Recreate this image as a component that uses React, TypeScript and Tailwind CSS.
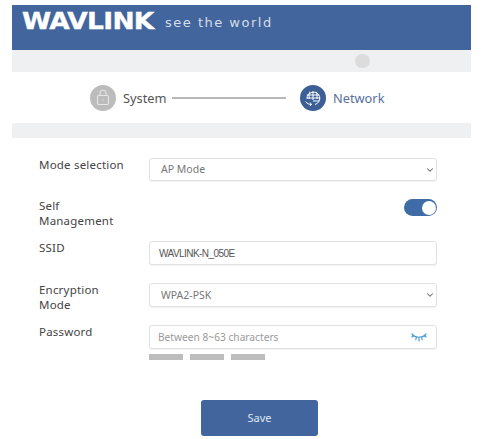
import React from "react";
import { ChevronDown } from "lucide-react";

const labelClass = "w-[110px] shrink-0 -mt-[1px] text-[11.5px] leading-[15px] tracking-[0.2px] text-[#444] font-['Noto_Sans',sans-serif]";
const fieldClass = "w-[288px] rounded-[3px] border border-[#e2e2e2] bg-white shadow-[0_1px_1px_rgba(0,0,0,0.06)]";

function LockIcon() {
  return (
    <svg width="16" height="17" viewBox="0 0 16 17" fill="none" stroke="#e6e6e6" strokeWidth="1.1">
      <rect x="2.5" y="6.5" width="11" height="9" rx="1.2" />
      <path d="M5 6.5V4.2a3 3 0 0 1 6 0v2.3" />
      <rect x="7.4" y="10.4" width="1.2" height="1.2" fill="#e6e6e6" stroke="none" />
    </svg>
  );
}

function GlobeIcon() {
  return (
    <svg width="18" height="18" viewBox="0 0 18 18" fill="none" stroke="#fff" strokeWidth="1">
      <path d="M3 10A6.5 6.5 0 0 1 15.6 7.5a6.5 6.5 0 0 1-4.6 8" />
      <path d="M9 2v9M5.8 2.8C5 5 5 8 5.3 10M12.2 2.8c.8 2 1 4.5.8 7.2" />
      <path d="M2.8 6h12.4M3 9h13M9 12h6" />
      <path d="M1.5 12.5c1.5 2 3.5 3 6 3l-1.5-2M7.5 15.5 5.8 17" />
    </svg>
  );
}

function ClosedEye() {
  return (
    <svg width="16" height="9" viewBox="0 0 16 9" fill="none" stroke="#4a9fd8" strokeWidth="1.2" strokeLinecap="round">
      <path d="M1.5 2c3.5 3 9.5 3 13 0" />
      <path d="M1 .8 3 3M5.4 4 4.8 7M10.6 4l.6 3M15 .8 13 3M8 4.5V8M3 3 .8 4M13 3l2.2 1" />
    </svg>
  );
}

function FormRow({ label, children }: { label: React.ReactNode; children: React.ReactNode }) {
  return (
    <div className="flex items-start">
      <div className={labelClass}>{label}</div>
      {children}
    </div>
  );
}

function SelectField({ value, height }: { value: string; height: string }) {
  return (
    <div className="relative">
      <select
        className={`${fieldClass} ${height} block appearance-none pl-[11px] pt-[1px] text-[10.5px] text-[#777] font-['Noto_Sans',sans-serif]`}
        defaultValue={value}
      >
        <option>{value}</option>
      </select>
      <ChevronDown size={10} strokeWidth={2.5} className="pointer-events-none absolute right-[2px] top-[7px] text-[#666]" />
    </div>
  );
}

export default function App() {
  return (
    <div className="w-[483px] h-[439px] overflow-hidden bg-white px-3 pt-[5px]">
      {/* header */}
      <div className="h-[45px] bg-[#41659c] pl-[10px] pt-[3px] flex items-start overflow-hidden">
        <span className="text-[23px] leading-[26px] font-bold text-white origin-left scale-x-[1.15] w-[133px] font-['DejaVu_Sans',sans-serif] tracking-[-0.6px] [-webkit-text-stroke:0.4px_white]">
          WAVLINK
        </span>
        <span className="ml-[10px] mt-[6px] text-[13px] leading-[18px] tracking-[1.5px] text-[#d5deea] font-['DejaVu_Sans',sans-serif]">
          see the world
        </span>
      </div>
      <div className="h-[22px] bg-[#eef0f1] pl-[343px] pt-[4px]">
        <div className="h-[14px] w-[15px] rounded-full bg-[#dcdcdc]" />
      </div>

      {/* steps */}
      <div className="h-[51px] flex items-center pl-[78px] font-['Noto_Sans',sans-serif]">
        <div className="h-[26px] w-[26px] rounded-full bg-[#bcbcbc] flex items-center justify-center">
          <LockIcon />
        </div>
        <span className="ml-[7px] w-[43px] pt-[3px] text-[12.8px] text-[#555]">System</span>
        <div className="ml-[6px] mt-[1px] h-[2px] w-[114px] bg-[#b8b8b8]" />
        <div className="ml-[14px] h-[26px] w-[26px] rounded-full bg-[#3c5f97] flex items-center justify-center">
          <GlobeIcon />
        </div>
        <span className="ml-[7px] pt-[3px] text-[12.8px] text-[#5a6f9a]">Network</span>
      </div>
      <div className="h-[15px] bg-[#eef0f1]" />

      {/* form */}
      <div className="pl-[27px] pt-[20px] flex flex-col">
        <FormRow label="Mode selection">
          <SelectField value="AP Mode" height="h-[23px]" />
        </FormRow>
        <div className="mt-[18px] h-[42px] flex items-start">
          <div className={labelClass}>
            Self
            <br />
            Management
          </div>
          <div className="ml-[255px] h-[17px] w-[33px] rounded-full bg-[#3f6ba6] flex items-center justify-end pr-[1px]">
            <div className="h-[14px] w-[14px] rounded-full bg-white" />
          </div>
        </div>
        <FormRow label="SSID">
          <div className={`${fieldClass} h-[24px] flex items-center pl-[9px] text-[10px] tracking-[-0.55px] text-[#555] font-['Liberation_Sans',sans-serif]`}>
            WAVLINK-N_050E
          </div>
        </FormRow>
        <div className="mt-[18px] h-[24px]">
          <FormRow label={<>Encryption<br />Mode</>}>
            <SelectField value="WPA2-PSK" height="h-[24px]" />
          </FormRow>
        </div>
        <div className="mt-[18px]">
          <FormRow label="Password">
            <div className={`${fieldClass} h-[24px] flex items-center justify-between pl-[8px] pr-[9px] pt-[1px] text-[10.2px] text-[#9a9a9a] font-['Noto_Sans',sans-serif]`}>
              <span>Between 8~63 characters</span>
              <ClosedEye />
            </div>
          </FormRow>
        </div>
        <div className="ml-[110px] mt-[5px] flex gap-[7px]">
          <div className="h-[6px] w-[34px] bg-[#bdbdbd]" />
          <div className="h-[6px] w-[34px] bg-[#bdbdbd]" />
          <div className="h-[6px] w-[34px] bg-[#bdbdbd]" />
        </div>
        <button className="ml-[162px] mt-[40px] h-[36px] w-[117px] rounded-[3px] bg-[#41659c] text-[11px] text-[#dfe6f0] font-['Noto_Sans',sans-serif]">
          Save
        </button>
      </div>
    </div>
  );
}
